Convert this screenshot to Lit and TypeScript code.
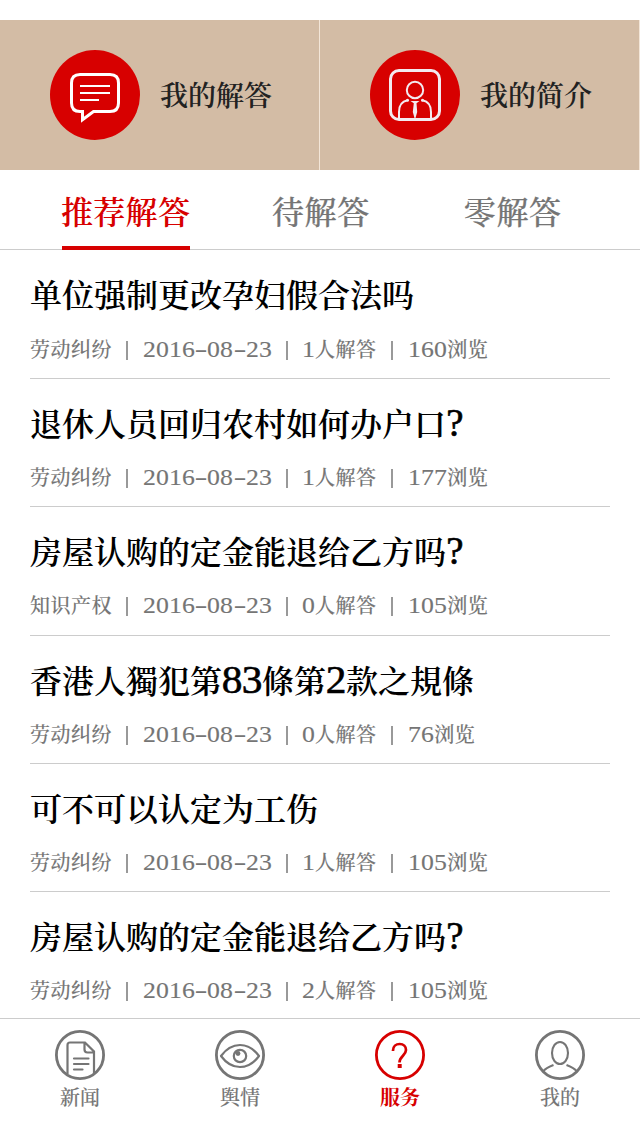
import { LitElement, html, css, svg } from "lit";
import { customElement, state } from "lit/decorators.js";
import { classMap } from "lit/directives/class-map.js";

interface Question {
  title: string;
  topic: string;
  date: string;
  answers: string;
  views: string;
}

const QUESTIONS: Question[] = [
  { title: "单位强制更改孕妇假合法吗", topic: "劳动纠纷", date: "2016-08-23", answers: "1人解答", views: "160浏览" },
  { title: "退休人员回归农村如何办户口?", topic: "劳动纠纷", date: "2016-08-23", answers: "1人解答", views: "177浏览" },
  { title: "房屋认购的定金能退给乙方吗?", topic: "知识产权", date: "2016-08-23", answers: "0人解答", views: "105浏览" },
  { title: "香港人獨犯第83條第2款之規條", topic: "劳动纠纷", date: "2016-08-23", answers: "0人解答", views: "76浏览" },
  { title: "可不可以认定为工伤", topic: "劳动纠纷", date: "2016-08-23", answers: "1人解答", views: "105浏览" },
  { title: "房屋认购的定金能退给乙方吗?", topic: "劳动纠纷", date: "2016-08-23", answers: "2人解答", views: "105浏览" },
];

// Digits are set larger and a little wider than the surrounding Chinese, one fixed cell each.
const mixed = (text: string) =>
  text
    .split(/([0-9?-])/)
    .filter(Boolean)
    .map((run) =>
      run === "-"
        ? html`<span class="dash">-</span>`
        : run === "?"
          ? html`<span class="mark">?</span>`
          : /[0-9]/.test(run)
            ? html`<span class="digit">${run}</span>`
            : run
    );

const answerIcon = svg`
  <circle cx="45" cy="45" r="45" fill="#d70000"/>
  <path d="M30 24.500H60Q68.500 24.500 68.500 33V53Q68.500 61.500 60 61.500H43.500L32.500 69.700V61.500H30Q21.500 61.500 21.500 53V33Q21.500 24.500 30 24.500Z" fill="none" stroke="#fff" stroke-width="3"/>
  <path d="M30 36H60M30 43H60M30 50H49" fill="none" stroke="#fff" stroke-width="2"/>`;

const profileIcon = svg`
  <circle cx="45" cy="45" r="45" fill="#d70000"/>
  <rect x="20.500" y="20.500" width="49" height="49" rx="8.500" fill="none" stroke="#f3eaf0" stroke-width="3"/>
  <g fill="none" stroke="#f3eaf0" stroke-width="2">
    <circle cx="45" cy="40" r="8.200"/>
    <path d="M29 68V62Q29 52 37.500 50.300M61 68V62Q61 52 52.500 50.300" stroke-linecap="round"/>
  </g>
  <circle cx="37.500" cy="50.300" r="1.500" fill="#f3eaf0"/>
  <circle cx="52.500" cy="50.300" r="1.500" fill="#f3eaf0"/>
  <path d="M40.500 51H49.500L46.500 53.300L47.200 62L45.500 68H44.500L42.800 62L43.800 53.300Z" fill="#f3eaf0"/>`;

const newsIcon = svg`
  <path d="M12.500 44V15Q12.500 12.500 15 12.500H30L39 21.500V43M29.500 12.500V19.500Q29.500 22.500 32.500 22.500H39" stroke-width="2.200"/>
  <path d="M19 28.500H33.500M19 34H33.500M19 39.500H27.500" stroke-width="2.200" stroke-linecap="round"/>`;

const eyeIcon = svg`
  <path d="M6 26Q14 15 25 15T44 26Q36 37 25 37T6 26Z" stroke-width="2.200" stroke-linejoin="round"/>
  <circle cx="25" cy="26" r="6.200" stroke-width="2.200"/>
  <circle cx="23" cy="23.500" r="2.400" fill="currentColor" stroke="none"/>`;

const serviceIcon = svg`
  <path d="M18 21V20.500C18 16.500 21 14 24.700 14C28.500 14 31 16.500 31 20C31 25.500 24.500 26 24.500 32.500" stroke-width="2.700"/>
  <rect x="22.700" y="34" width="4" height="4" fill="currentColor" stroke="none"/>`;

const meIcon = svg`
  <ellipse cx="25" cy="23" rx="8" ry="11" stroke-width="2.100"/>
  <path d="M8.500 41Q10 38.500 18.500 35M41.500 41Q40 38.500 31.500 35" stroke-width="2.100"/>`;

const NAV = [
  { label: "新闻", icon: newsIcon },
  { label: "舆情", icon: eyeIcon },
  { label: "服务", icon: serviceIcon },
  { label: "我的", icon: meIcon },
];

@customElement("app-root")
export class AppRoot extends LitElement {
  @state() private tab = 0;
  @state() private section = 2;

  static styles = css`
    :host {
      display: flex;
      flex-direction: column;
      box-sizing: border-box;
      width: 640px;
      height: 1136px;
      padding-top: 20px;
      overflow: hidden;
      background: #fff;
      color: #757575;
      font-family: "Noto Serif CJK SC", "Source Han Serif SC", "Noto Sans CJK SC", serif;
    }
    .shortcuts {
      display: grid;
      grid-template-columns: 1fr 1fr;
      height: 150px;
      flex: none;
    }
    .shortcut {
      display: flex;
      align-items: center;
      gap: 20px;
      padding-left: 50px;
      background: #d3bca5;
      border-right: 1px solid #f3e6d8;
      color: #222;
      font-size: 28px;
      font-weight: 600;
      line-height: 40px;
    }
    .shortcut span {
      padding-bottom: 2px;
    }
    .shortcut svg {
      width: 90px;
      height: 90px;
      flex: none;
    }
    .tabs {
      display: flex;
      box-sizing: border-box;
      height: 80px;
      flex: none;
      padding-left: 62px;
      border-bottom: 1px solid #ccc;
      font-size: 32px;
      font-weight: 500;
      line-height: 80px;
      -webkit-text-stroke: 0.250px currentColor;
    }
    .tab {
      box-sizing: border-box;
      height: 80px;
      margin-right: 82px;
      letter-spacing: 0.600px;
      white-space: nowrap;
    }
    .tab + .tab {
      margin-right: 94px;
    }
    .tab.active {
      width: 128px;
      border-bottom: 4px solid #d70000;
      color: #d70000;
      font-weight: 600;
      letter-spacing: 0.300px;
      text-indent: -1px;
      -webkit-text-stroke: 0;
    }
    .list {
      flex: 1;
      min-height: 0;
      padding: 0 30px;
      overflow: hidden;
    }
    .item {
      box-sizing: border-box;
      height: 128.250px;
      padding-top: 21px;
      border-bottom: 1px solid #ccc;
      white-space: nowrap;
    }
    .item:first-child {
      height: 129px;
    }
    .item:first-child .meta {
      margin-top: 19px;
    }
    .title {
      height: 44px;
      color: #000;
      font-size: 32px;
      font-weight: 600;
      line-height: 44px;
    }
    .meta {
      display: flex;
      height: 30px;
      margin-top: 18px;
      font-size: 20px;
      font-weight: 500;
      line-height: 30px;
      letter-spacing: 0.500px;
      -webkit-text-stroke: 0.120px currentColor;
    }
    .digit,
    .mark,
    .dash {
      display: inline-block;
      font-family: "Liberation Serif", serif;
      font-weight: 400;
      line-height: 1;
      letter-spacing: 0;
      text-align: center;
    }
    .title .digit,
    .title .mark {
      font-size: 39px;
      -webkit-text-stroke: 0.600px currentColor;
    }
    .title .digit {
      width: 20px;
      transform: scaleX(1.060);
    }
    .title .mark {
      width: 18px;
    }
    .meta .digit {
      width: 13.100px;
      font-size: 23px;
      transform: scaleX(1.120);
    }
    .dash {
      width: 12px;
      font-size: 23px;
      transform: scaleX(1.700);
      -webkit-text-stroke: 0;
    }
    .field {
      display: flex;
    }
    .field + .field::before {
      content: "";
      width: 2px;
      height: 19px;
      margin: 7px 15px 0 0;
      background: #999;
    }
    .field.topic { width: 96px; }
    .field.date { width: 160px; }
    .field.answers { width: 105px; }
    .field.answers::before { margin-right: 14px; }
    .nav {
      display: grid;
      grid-template-columns: repeat(4, 1fr);
      box-sizing: border-box;
      height: 118px;
      flex: none;
      padding-top: 11px;
      border-top: 1px solid #ccc;
    }
    .dest {
      display: flex;
      flex-direction: column;
      align-items: center;
      font-size: 20px;
      font-weight: 500;
      line-height: 33px;
      -webkit-text-stroke: 0.120px currentColor;
    }
    .dest.active {
      color: #d70000;
      font-weight: 700;
      -webkit-text-stroke: 0;
    }
    .dest svg {
      width: 50px;
      height: 50px;
      flex: none;
      fill: none;
      stroke: currentColor;
    }
  `;

  render() {
    return html`
      <header class="shortcuts">
        <div class="shortcut"><svg viewBox="0 0 90 90">${answerIcon}</svg><span>我的解答</span></div>
        <div class="shortcut"><svg viewBox="0 0 90 90">${profileIcon}</svg><span>我的简介</span></div>
      </header>
      <div class="tabs">
        ${["推荐解答", "待解答", "零解答"].map(
          (label, i) => html`<div
            class=${classMap({ tab: true, active: i === this.tab })}
            @click=${() => (this.tab = i)}
          >${label}</div>`
        )}
      </div>
      <main class="list">
        ${QUESTIONS.map(
          (q) => html`<article class="item">
            <div class="title">${mixed(q.title)}</div>
            <div class="meta">
              <div class="field topic"><span>${q.topic}</span></div>
              <div class="field date"><span>${mixed(q.date)}</span></div>
              <div class="field answers"><span>${mixed(q.answers)}</span></div>
              <div class="field views"><span>${mixed(q.views)}</span></div>
            </div>
          </article>`
        )}
      </main>
      <nav class="nav">
        ${NAV.map(
          (n, i) => html`<div
            class=${classMap({ dest: true, active: i === this.section })}
            @click=${() => (this.section = i)}
          >
            <svg viewBox="0 0 50 50">
              <circle cx="25" cy="25" r="23.600" stroke-width="2.800" />
              ${n.icon}
            </svg>
            <span>${n.label}</span>
          </div>`
        )}
      </nav>
    `;
  }
}
